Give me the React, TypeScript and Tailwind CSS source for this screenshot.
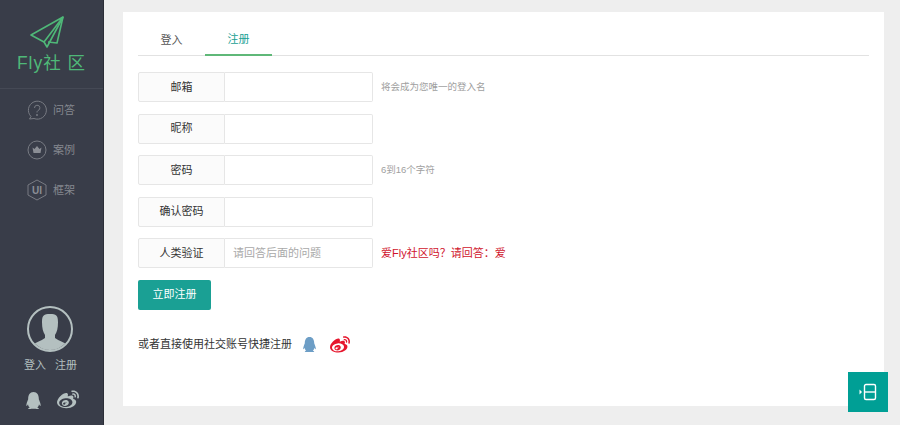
import { FaQq, FaWeibo } from "react-icons/fa";

const font = { fontFamily: '"Liberation Sans", "Noto Sans CJK SC", sans-serif' };

function Row({ label, placeholder, hint, danger }: { label: string; placeholder?: string; hint?: string; danger?: boolean }) {
  return (
    <div className="flex items-center h-[30px] mb-[11.5px]">
      <div className="w-[87px] h-full flex items-center justify-center bg-[#fbfbfb] border border-[#e6e6e6] rounded-l-[2px] text-[11px] text-[#333]">
        {label}
      </div>
      <input
        placeholder={placeholder}
        className="w-[148px] h-full border border-l-0 border-[#e6e6e6] rounded-r-[2px] px-2 text-[11px] bg-white outline-none placeholder:text-[#a9a9a9]"
      />
      {hint && (
        <span className={danger ? "ml-2 text-[11px] text-[#d0142c]" : "ml-2 text-[9.5px] text-[#a0a0a0]"}>{hint}</span>
      )}
    </div>
  );
}

function NavItem({ icon, label }: { icon: React.ReactNode; label: string }) {
  return (
    <div className="flex items-center h-[40px] pl-[27px] gap-[6px] text-[11px] text-[#85888f]">
      {icon}
      <span>{label}</span>
    </div>
  );
}

export default function App() {
  return (
    <div style={font} className="relative flex h-screen overflow-hidden bg-[#eeeeee]">
      <aside className="w-[104px] shrink-0 h-full bg-[#393d49] border-r border-[#2b2e37] flex flex-col">
        <div className="h-[89px] border-b border-[#454955] flex flex-col items-center pt-[15px]">
          <svg width="36" height="34" viewBox="0 0 36 34" fill="none" stroke="#4fb878" strokeWidth="1.6" strokeLinejoin="round" className="-ml-[10px]">
            <path d="M34 2 L2 20 L15 27 Z" />
            <path d="M34 2 L18 32 L15 27" />
            <path d="M34 2 L28 28 L19 27" />
          </svg>
          <div className="text-[17.5px] leading-[20px] tracking-[1px] text-[#4fb878] mt-[4px] whitespace-nowrap">Fly社 区</div>
        </div>
        <nav className="pt-[1px] flex flex-col">
          <NavItem
            label="问答"
            icon={
              <svg width="20" height="20" viewBox="0 0 20 20" fill="none" stroke="#787b83" strokeWidth="1">
                <path d="M4 16.5 A9 9 0 1 1 7 18.5 L2.5 19 Z" />
                <path d="M7.5 8 A2.7 2.7 0 1 1 11 10.5 Q10 11 10 12.5" />
                <circle cx="10" cy="15" r="0.6" fill="#787b83" />
              </svg>
            }
          />
          <NavItem
            label="案例"
            icon={
              <svg width="20" height="20" viewBox="0 0 20 20" fill="none" stroke="#787b83" strokeWidth="1">
                <circle cx="10" cy="10" r="9" />
                <path d="M5.5 7.5 L7.5 9 L10 6 L12.5 9 L14.5 7.5 L13.5 13 H6.5 Z" fill="#8b8e95" stroke="none" />
              </svg>
            }
          />
          <NavItem
            label="框架"
            icon={
              <svg width="20" height="22" viewBox="0 0 20 22" fill="none" stroke="#787b83" strokeWidth="1">
                <path d="M10 1 L19 6 V16 L10 21 L1 16 V6 Z" />
                <text x="10" y="14.5" textAnchor="middle" fontSize="10" fontWeight="700" fill="#8b8e95" stroke="none" fontFamily="Liberation Sans">UI</text>
              </svg>
            }
          />
        </nav>
        <div className="mt-auto pb-[14px] flex flex-col items-center">
          <div className="w-[46px] h-[46px] -ml-[3px] rounded-full border-2 border-[#b4c0c0] overflow-hidden">
            <svg viewBox="0 0 42 42" width="42" height="42">
              <path d="M13 14 C13 7 15 6 21 6 C27 6 29 7 29 14 C29 20 28 24 26 27 L26 30 C30 33 35 34 38 37 L38 42 H4 V37 C7 34 12 33 16 30 L16 27 C14 24 13 20 13 14 Z" fill="#b4c0c0" />
            </svg>
          </div>
          <div className="flex gap-[9px] mt-[4px] -ml-[2px] text-[11px] leading-[18px] text-[#b4c0c0]">
            <span>登入</span>
            <span>注册</span>
          </div>
          <div className="flex items-center gap-[15px] mt-[15px] text-[#b4c0c0]">
            <FaQq size={17} />
            <FaWeibo size={22} />
          </div>
        </div>
      </aside>
      <main className="flex-1 pt-[12px] pb-[19px] pl-[19px] pr-[16px] min-w-0">
        <div className="h-full bg-white px-[15px] pt-[7px]">
          <div className="flex h-[37px] border-b border-[#e2e2e2] text-[11px]">
            <div className="w-[67px] h-[37px] pt-[5px] flex items-center justify-center text-[#555]">登入</div>
            <div className="w-[67px] h-[37px] pt-[5px] flex items-center justify-center text-[#1aa094] border-b-2 border-[#5fb878]">注册</div>
          </div>
          <form className="pt-[16px]">
            <Row label="邮箱" hint="将会成为您唯一的登入名" />
            <Row label="昵称" />
            <Row label="密码" hint="6到16个字符" />
            <Row label="确认密码" />
            <Row label="人类验证" placeholder="请回答后面的问题" hint="爱Fly社区吗？请回答：爱" danger />
            <button type="button" className="w-[73px] h-[30px] bg-[#1aa094] text-white text-[11px] rounded-[2px] block">
              立即注册
            </button>
            <div className="flex items-center mt-[25px] text-[11px] text-[#333]">
              <span>或者直接使用社交账号快捷注册</span>
              <FaQq size={15} className="ml-[10px] text-[#6d9ec6]" />
              <FaWeibo size={20} className="ml-[13px] text-[#e6162d]" />
            </div>
          </form>
        </div>
      </main>
      <div className="absolute left-[848px] top-[372px] w-[40px] h-[40px] bg-[#009f95] flex items-center justify-center">
        <svg width="20" height="18" viewBox="0 0 20 18" fill="none" stroke="#fff" strokeWidth="1.4">
          <rect x="6.5" y="1.5" width="11" height="15" rx="1.5" />
          <path d="M6.5 9 H17.5" />
          <path d="M1.5 6.5 L4 9 L1.5 11.5 Z" fill="#fff" stroke="none" />
        </svg>
      </div>
    </div>
  );
}
